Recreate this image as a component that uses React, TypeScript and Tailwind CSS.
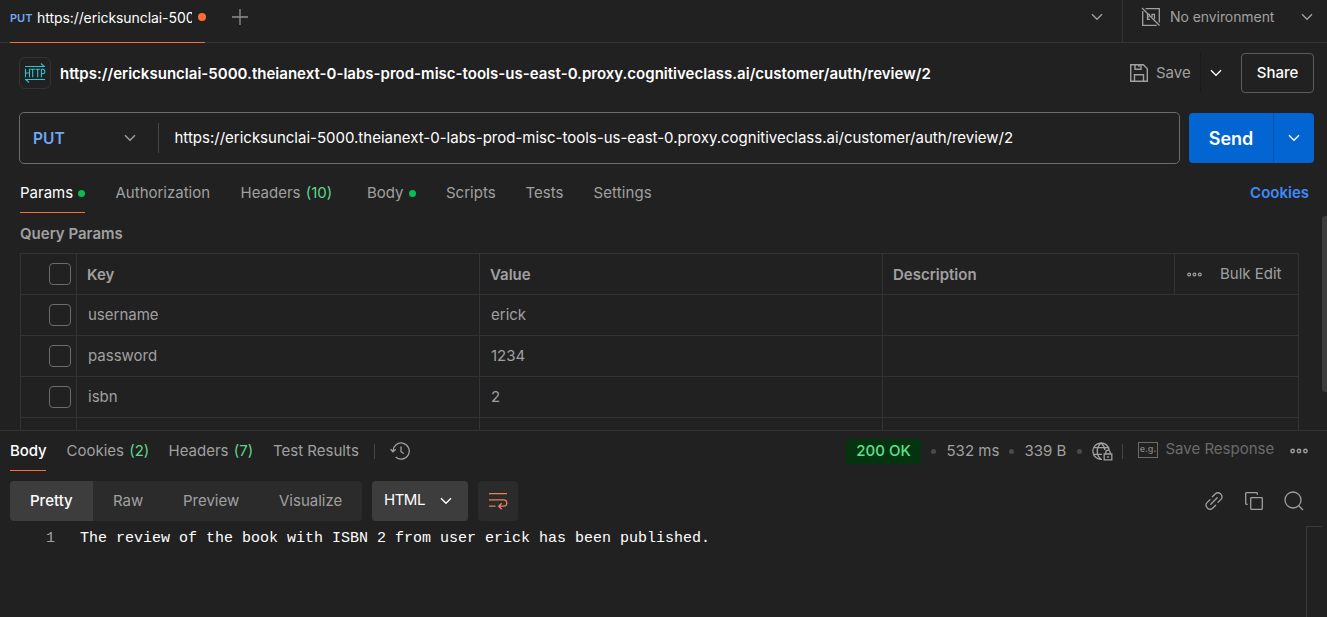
import React from "react";

type IconProps = { className?: string };

const Chevron = ({ className = "" }: IconProps) => (
  <svg width="12" height="8" viewBox="0 0 12 8" fill="none" stroke="currentColor" strokeWidth="1.4" className={`shrink-0 ${className}`}>
    <path d="M1 1.2 6 6.2l5-5" />
  </svg>
);

const Dots = ({ className = "" }: IconProps) => (
  <svg viewBox="0 0 18 6" fill="none" stroke="currentColor" strokeWidth="1.4" className={`shrink-0 ${className}`}>
    <circle cx="2.6" cy="3" r="1.7" />
    <circle cx="9" cy="3" r="1.7" />
    <circle cx="15.4" cy="3" r="1.7" />
  </svg>
);

const HttpIcon = () => (
  <svg width="22" height="22" viewBox="0 0 22 22" fill="none" stroke="#2ec4d3" strokeWidth="1.1">
    <path d="M1 4.500h20M17 1.500l3.200 3M21 17.500H1M5 20.500l-3.200-3" />
    <path d="M1.500 6.800v8.400M5.500 6.800v8.400M1.500 11h4M6.500 7.300h4.400M8.700 7.300v7.900M11.500 7.300h4.400M13.700 7.300v7.900M17.400 15.200V7.300h1.400q2 0 2 2.200t-2 2.200h-1.400" />
  </svg>
);

const NoEnvIcon = () => (
  <svg width="20" height="20" viewBox="0 0 20 20" fill="none" stroke="currentColor" strokeWidth="1.3">
    <path d="M4.500 1.700h13.800v13.800M1.700 4v14.300h14M1 1l17.500 17.500" />
    <path d="M9 7.300H6.500v5H9M6.500 9.800h2M11 10V7.300h2.500v5" />
  </svg>
);

const SaveIcon = () => (
  <svg width="20" height="20" viewBox="0 0 20 20" fill="none" stroke="currentColor" strokeWidth="1.4">
    <path d="M1.700 1.700h12.600l4 4v12.600H1.700zM6 1.700v4.500h6V1.700M5.500 18.300v-6.500h9v6.500M10 1.700v2.300" />
  </svg>
);

const HistoryIcon = () => (
  <svg width="20" height="18" viewBox="0 0 20 18" fill="none" stroke="currentColor" strokeWidth="1.300">
    <path d="M3 9.500a8.100 8.100 0 1 1 2.700 5.600M.6 7.200 3 9.800l2.700-2.600M11 4.500v5.200l2.800 1.800" />
  </svg>
);

const WrapIcon = () => (
  <svg width="20" height="18" viewBox="0 0 20 18" fill="none" stroke="#e8825a" strokeWidth="1.300">
    <path d="M1 1.700h18M1 7.900h14.600a3 3 0 0 1 0 6.300h-4M1 14.200h6.500M13.700 11.200l-3 3 3 3" />
  </svg>
);

const GlobeLockIcon = () => (
  <svg width="21" height="19" viewBox="0 0 21 19" fill="none" stroke="currentColor" strokeWidth="1.300">
    <path d="M10 17.300A8.200 8.200 0 1 1 17.200 8M9 1c-5 4.500-5 12 0 16.300M9 1c2.500 2 3.700 4.500 3.900 7M1.700 5.700h14.600M1.700 12.300H10" />
    <path d="M12.200 12h7.600v5.800h-7.600zM13.800 12v-1.600a2.200 2.200 0 0 1 4.400 0V12M16 14v2" />
  </svg>
);

const LinkIcon = () => (
  <svg width="18" height="18" viewBox="0 0 18 18" fill="none" stroke="currentColor" strokeWidth="1.300" strokeLinecap="round">
    <path d="M7.300 4.700 10.400 1.800a3.500 3.500 0 0 1 5 0l.6.6a3.500 3.500 0 0 1 0 5l-3 2.900M10.700 13.300l-3.100 2.900a3.500 3.500 0 0 1-5 0l-.6-.6a3.500 3.500 0 0 1 0-5l3-2.900M5.800 12.200l6.400-6.400" />
  </svg>
);

const CopyIcon = () => (
  <svg width="18" height="18" viewBox="0 0 18 18" fill="none" stroke="currentColor" strokeWidth="1.300">
    <rect x="5.700" y="5.700" width="11.600" height="11.600" rx=".7" />
    <path d="M2.700 12.300H1.500a.8.800 0 0 1-.8-.8V1.500a.8.800 0 0 1 .8-.8h10a.8.800 0 0 1 .8.800v1.200" />
  </svg>
);

const SearchIcon = () => (
  <svg width="20" height="20" viewBox="0 0 20 20" fill="none" stroke="currentColor" strokeWidth="1.300">
    <circle cx="9" cy="9" r="8" />
    <path d="m14.700 14.700 4.300 4.300" />
  </svg>
);

const Checkbox = () => <span className="h-[22px] w-[22px] rounded border border-[#6b6b6b]" />;

const rows = [
  ["username", "erick"],
  ["password", "1234"],
  ["isbn", "2"],
  ["", ""],
];

const Bullet = () => <span className="h-[5px] w-[5px] rounded-full bg-[#4a4a4a]" />;

function TopBar() {
  return (
    <header className="flex h-[43px] shrink-0 border-b border-[#333]">
      <div className="ml-[10px] flex h-[43px] w-[195px] items-center border-b border-[#ff6c37] pb-[8px]">
        <span className="w-[27px] shrink-0 pt-0.5 text-[11px] font-semibold text-[#6fa8f5]">PUT</span>
        <span className="w-[155px] shrink-0 overflow-hidden whitespace-nowrap text-[14px] tracking-[-0.07px] text-white">https://ericksunclai-500</span>
        <span className="ml-[6px] h-2 w-2 shrink-0 rounded-full bg-[#ff6c37]" />
      </div>
      <svg width="16" height="16" viewBox="0 0 16 16" stroke="#909090" strokeWidth="1.300" className="ml-[27px] mt-[9px]">
        <path d="M8 0v16M0 8h16" />
      </svg>
      <Chevron className="ml-auto mr-[19px] mt-[13px]" />
      <div className="flex w-[205px] items-start border-l border-[#333] pl-[18px] pt-[7px]">
        <NoEnvIcon />
        <span className="ml-[9px] w-[131px] text-[14px] leading-[20px] tracking-[-0.07px]">No environment</span>
        <Chevron className="mt-[6px]" />
      </div>
    </header>
  );
}

function RequestHeader() {
  return (
    <div className="flex h-[69px] shrink-0 items-start pl-[19px] pt-[10px]">
      <span className="mt-1 flex h-8 w-8 items-center justify-center rounded-md border border-[#333]">
        <HttpIcon />
      </span>
      <h1 className="ml-[9px] mt-[10px] whitespace-nowrap text-[15px] font-semibold leading-[22px] tracking-[0.015px] text-white">
        https://ericksunclai-5000.theianext-0-labs-prod-misc-tools-us-east-0.proxy.cognitiveclass.ai/customer/auth/review/2
      </h1>
      <div className="ml-auto flex h-10 items-center pr-[13px]">
        <SaveIcon />
        <span className="ml-[7px] w-[44px] text-[15px]">Save</span>
        <span className="h-10 w-px bg-[#1a1a1a]" />
        <Chevron className="ml-[9px] text-white" />
        <button className="ml-[19px] h-10 w-[73px] rounded border border-[#5c5c5c] text-[15px] font-medium text-white">Share</button>
      </div>
    </div>
  );
}

function UrlBar() {
  return (
    <div className="flex h-[52px] shrink-0 items-center pl-[19px]">
      <div className="flex h-[52px] w-[1161px] items-center rounded-[5px] border border-[#6b6b6b]">
        <span className="ml-[13px] w-[91px] pt-px text-[15.500px] font-semibold text-[#6fa8f5]">PUT</span>
        <Chevron />
        <span className="ml-[22px] h-[30px] w-px bg-[#454545]" />
        <span className="ml-[15.500px] whitespace-nowrap text-[15px] text-white">
          https://ericksunclai-5000.theianext-0-labs-prod-misc-tools-us-east-0.proxy.cognitiveclass.ai/customer/auth/review/2
        </span>
      </div>
      <div className="ml-[9px] flex h-[50px] w-[125px] rounded bg-[#0265d2] text-white">
        <button className="w-[84px] text-[18px] font-semibold">Send</button>
        <button className="flex flex-1 items-center justify-center border-l border-[#0453ae]">
          <Chevron />
        </button>
      </div>
    </div>
  );
}

function RequestTabs() {
  return (
    <nav className="flex h-[49px] shrink-0 pl-5 text-[15px] leading-[58px]">
      <div className="mr-[30.500px] flex h-[49px] w-[65px] items-start justify-between border-b border-[#ff6c37] text-white">
        <span>Params</span>
        <i className="mt-[26px] h-[7px] w-[7px] rounded-full bg-[#0cbb52]" />
      </div>
      <span className="w-[125px]">Authorization</span>
      <span className="w-[126.500px]">
        Headers <span className="ml-px text-[#5fd68b]">(10)</span>
      </span>
      <div className="mr-[30px] flex w-[49px] items-start justify-between">
        <span>Body</span>
        <i className="mt-[26px] h-[7px] w-[7px] rounded-full bg-[#0cbb52]" />
      </div>
      <span className="w-[79.500px]">Scripts</span>
      <span className="w-[68px]">Tests</span>
      <span className="tracking-[0.1px]">Settings</span>
      <span className="ml-auto mr-[18px] font-semibold text-[#3d8bfd]">Cookies</span>
    </nav>
  );
}

function ParamsTable() {
  return (
    <div className="flex h-[217px] shrink-0 overflow-hidden">
      <div className="ml-5 w-[1279px]">
        <h2 className="h-10 text-[15px] font-semibold leading-[42px]">Query Params</h2>
        <div className="border-l border-t border-[#333] text-[15px]">
          <div className="flex h-[41px] border-b border-[#333] font-semibold leading-[41px]">
            <div className="flex w-14 items-center border-r border-[#333] pl-7">
              <Checkbox />
            </div>
            <div className="w-[403px] border-r border-[#333] pl-[10px]">Key</div>
            <div className="w-[403px] border-r border-[#333] pl-[10px]">Value</div>
            <div className="w-[292px] border-r border-[#333] pl-[10px]">Description</div>
            <div className="flex flex-1 items-center border-r border-[#333] pl-3 font-normal">
              <Dots className="h-[5px] w-[15px]" />
              <span className="-mt-0.5 ml-[18px]">Bulk Edit</span>
            </div>
          </div>
          {rows.map(([key, value], index) => (
            <div key={index} className="flex h-[41px] border-b border-[#333] leading-10">
              <div className="flex w-14 items-center border-r border-[#333] pl-7">{key && <Checkbox />}</div>
              <div className="w-[403px] border-r border-[#333] pl-[11px]">{key}</div>
              <div className="w-[403px] border-r border-[#333] pl-[11px]">{value}</div>
              <div className="flex-1 border-r border-[#333]" />
            </div>
          ))}
        </div>
      </div>
      <div className="ml-auto mt-[3px] h-[176px] w-[5px] rounded-l bg-[#3d3d3d]" />
    </div>
  );
}

function ResponseTabs() {
  return (
    <div className="flex h-[41px] shrink-0 items-start border-t border-[#333] pl-[10px] text-[15px] leading-10">
      <span className="mr-[20.500px] h-10 w-9 border-b border-[#ff6c37] font-medium tracking-[-0.1px] text-white">Body</span>
      <span className="w-[102px]">
        Cookies <span className="ml-px text-[#5fd68b]">(2)</span>
      </span>
      <span className="w-[104.500px]">
        Headers <span className="ml-px text-[#5fd68b]">(7)</span>
      </span>
      <span className="w-[101px]">Test Results</span>
      <div className="flex h-10 flex-1 items-center">
        <span className="h-[15px] w-px bg-[#454545]" />
        <span className="ml-[15px]">
          <HistoryIcon />
        </span>
        <div className="ml-auto flex h-10 items-center">
          <span className="mr-[10px] flex h-[25px] w-[75px] items-center justify-center rounded bg-[#04330f] font-medium text-[#5fe08f]">200 OK</span>
          <Bullet />
          <span className="ml-[10.500px] w-[62.500px]">532 ms</span>
          <Bullet />
          <span className="ml-[10.500px] w-[52.500px]">339 B</span>
          <Bullet />
          <span className="ml-[10px]">
            <GlobeLockIcon />
          </span>
          <span className="ml-[9px] h-[15px] w-px bg-[#454545]" />
          <span className="-mt-[3px] ml-[15px] flex h-[16px] w-5 items-center justify-center border border-[#6b6b6b] pb-[3px] text-[9px] font-semibold leading-none text-[#7a7a7a]">e.g.</span>
          <span className="-mt-[4px] ml-[7.500px] w-[124.500px] whitespace-nowrap text-[#6b6b6b]">Save Response</span>
          <Dots className="mr-[19px] h-[6px] w-[18px]" />
        </div>
      </div>
    </div>
  );
}

function ResponseToolbar() {
  return (
    <div className="flex h-[55px] shrink-0 items-center pb-[5px] pl-[10px] pt-[10px] text-[15px]">
      <div className="flex h-10 w-[352px] overflow-hidden rounded bg-[#2b2b2b] leading-[39px]">
        <span className="w-[83px] bg-[#3d3d3d] pl-5 font-medium text-white">Pretty</span>
        <span className="w-[90px] pl-5">Raw</span>
        <span className="w-[96px]">Preview</span>
        <span>Visualize</span>
      </div>
      <button className="ml-[10px] flex h-10 w-24 items-center rounded bg-[#3d3d3d] pl-3 text-white">
        <span className="w-14 pb-px text-left tracking-[-0.5px]">HTML</span>
        <Chevron />
      </button>
      <button className="ml-[10px] flex h-10 w-10 items-center justify-center rounded bg-[#2b2b2b]">
        <WrapIcon />
      </button>
      <div className="ml-auto flex items-center pr-[23px]">
        <LinkIcon />
        <span className="ml-[22px]"><CopyIcon /></span>
        <span className="ml-[21px]"><SearchIcon /></span>
      </div>
    </div>
  );
}

export default function App() {
  return (
    <main className="flex h-[617px] w-[1327px] flex-col overflow-hidden bg-[#212121] font-['Inter',sans-serif] text-[#a0a0a0]">
      <TopBar />
      <RequestHeader />
      <UrlBar />
      <RequestTabs />
      <ParamsTable />
      <ResponseTabs />
      <ResponseToolbar />
      <div className="flex flex-1 font-['Liberation_Mono',monospace] text-[15px] leading-[25px]">
        <span className="w-[80px] pl-[46px]">1</span>
        <code className="font-['Liberation_Mono',monospace] text-white">The review of the book with ISBN 2 from user erick has been published.</code>
        <div className="ml-auto mr-[5px] w-4 border-l border-t border-[#3a3a3a]" />
      </div>
    </main>
  );
}
